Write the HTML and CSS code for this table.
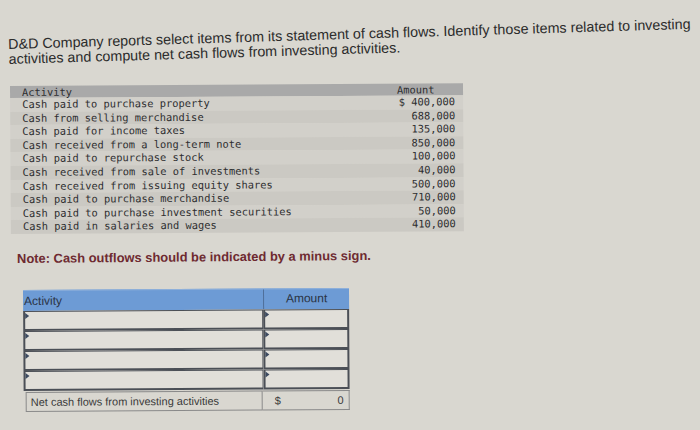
FILE: index.html
```html
<!DOCTYPE html>
<html>
<head>
<meta charset="utf-8">
<link rel="stylesheet" href="styles.css">
</head>
<body>
<div class="page">
  <p class="title">D&amp;D Company reports select items from its statement of cash flows. Identify those items related to investing activities and compute net cash flows from investing activities.</p>

  <div class="data">
    <div class="data-head"><span class="c-act">Activity</span><span class="c-amt">Amount</span></div>
    <div class="data-row"><span class="c-act">Cash paid to purchase property</span><span class="c-amt">$ 400,000</span></div>
    <div class="data-row alt"><span class="c-act">Cash from selling merchandise</span><span class="c-amt">688,000</span></div>
    <div class="data-row"><span class="c-act">Cash paid for income taxes</span><span class="c-amt">135,000</span></div>
    <div class="data-row alt"><span class="c-act">Cash received from a long-term note</span><span class="c-amt">850,000</span></div>
    <div class="data-row"><span class="c-act">Cash paid to repurchase stock</span><span class="c-amt">100,000</span></div>
    <div class="data-row alt"><span class="c-act">Cash received from sale of investments</span><span class="c-amt">40,000</span></div>
    <div class="data-row"><span class="c-act">Cash received from issuing equity shares</span><span class="c-amt">500,000</span></div>
    <div class="data-row alt"><span class="c-act">Cash paid to purchase merchandise</span><span class="c-amt">710,000</span></div>
    <div class="data-row"><span class="c-act">Cash paid to purchase investment securities</span><span class="c-amt">50,000</span></div>
    <div class="data-row alt"><span class="c-act">Cash paid in salaries and wages</span><span class="c-amt">410,000</span></div>
  </div>

  <p class="note">Note: Cash outflows should be indicated by a minus sign.</p>

  <div class="answer">
    <div class="ans-head">
      <div class="ah-act">Activity</div>
      <div class="ah-amt">Amount</div>
    </div>
    <div class="ans-row"><div class="cell c1"><i class="mark"></i></div><div class="cell c2"><i class="mark"></i></div></div>
    <div class="ans-row"><div class="cell c1"><i class="mark"></i></div><div class="cell c2"><i class="mark"></i></div></div>
    <div class="ans-row"><div class="cell c1"><i class="mark"></i></div><div class="cell c2"><i class="mark"></i></div></div>
    <div class="ans-row"><div class="cell c1"><i class="mark"></i></div><div class="cell c2"><i class="mark"></i></div></div>
    <div class="ans-total">
      <div class="t1">Net cash flows from investing activities</div>
      <div class="t2"><span>$</span><span>0</span></div>
    </div>
  </div>
</div>
</body>
</html>
```

FILE: styles.css
```css
html, body {
  margin: 0;
  padding: 0;
}
body {
  background: #d9d7d0;
  width: 700px;
  height: 430px;
  overflow: hidden;
  font-family: "Liberation Sans", Arial, sans-serif;
}
.page {
  padding-top: 37px;
}
.title {
  margin: 0 0 0 8px;
  width: 688px;
  font-size: 14.3px;
  line-height: 15px;
  color: #2b2b2b;
  transform: rotate(-1.7deg);
  transform-origin: 0 0;
}
.data {
  margin: 19px 0 0 10px;
  width: 453px;
  font-family: "DejaVu Sans Mono", "Liberation Mono", monospace;
  font-size: 10.4px;
  color: #2e2e30;
  transform: rotate(-0.35deg);
  transform-origin: 0 0;
}
.data-head, .data-row {
  display: flex;
  justify-content: space-between;
  height: 13.6px;
  line-height: 13.6px;
}
.data-head {
  background: #a9a9a9;
  height: 12px;
  line-height: 12px;
}
.data-row {
  background: #d2d0ca;
}
.data-row.alt {
  background: #cbc9c3;
}
.c-act {
  padding-left: 12px;
}
.c-amt {
  width: 72px;
  padding-right: 8px;
  text-align: right;
}
.data-head .c-amt {
  text-align: left;
  padding-left: 14px;
  width: 58px;
}
.note {
  margin: 17px 0 0 17px;
  font-size: 12.9px;
  font-weight: bold;
  color: #6e2a30;
  transform: rotate(-0.5deg);
  transform-origin: 0 0;
}
.answer {
  margin: 24px 0 0 23px;
  width: 326px;
  transform: rotate(-0.35deg);
  transform-origin: 0 0;
  font-family: "Liberation Sans", Arial, sans-serif;
}
.ans-head {
  display: flex;
  height: 21px;
  background: #6d9bd5;
  border-top: 1px solid #8fb0da;
  box-sizing: border-box;
  color: #2a3344;
  font-size: 12px;
}
.ah-act {
  width: 239px;
  line-height: 20px;
  border-right: 1px solid #4f6f9a;
  padding-left: 1px;
}
.ah-amt {
  flex: 1;
  text-align: center;
  line-height: 18px;
}
.ans-row {
  display: flex;
  height: 20px;
}
.cell {
  position: relative;
  box-sizing: border-box;
  height: 20px;
  background: #e1dfd9;
  border: 2px solid #4b4f56;
  border-top-width: 1px;
}
.c1 {
  width: 240px;
  border-right-width: 1px;
}
.c2 {
  flex: 1;
  border-left-width: 2px;
}
.mark {
  position: absolute;
  left: 0;
  top: 1px;
  width: 0;
  height: 0;
  border-top: 3px solid transparent;
  border-bottom: 3px solid transparent;
  border-left: 4px solid #3c4a60;
}
.ans-total {
  display: flex;
  height: 20px;
  margin-top: 1px;
  font-size: 11px;
  color: #3a3a3a;
}
.t1 {
  width: 237px;
  margin-left: 2px;
  box-sizing: border-box;
  border: 1px solid #8a8a8a;
  padding-left: 4px;
  line-height: 18px;
}
.t2 {
  flex: 1;
  display: flex;
  justify-content: space-between;
  box-sizing: border-box;
  border: 1px solid #8a8a8a;
  border-left: none;
  padding: 0 5px 0 12px;
  line-height: 18px;
}
```
